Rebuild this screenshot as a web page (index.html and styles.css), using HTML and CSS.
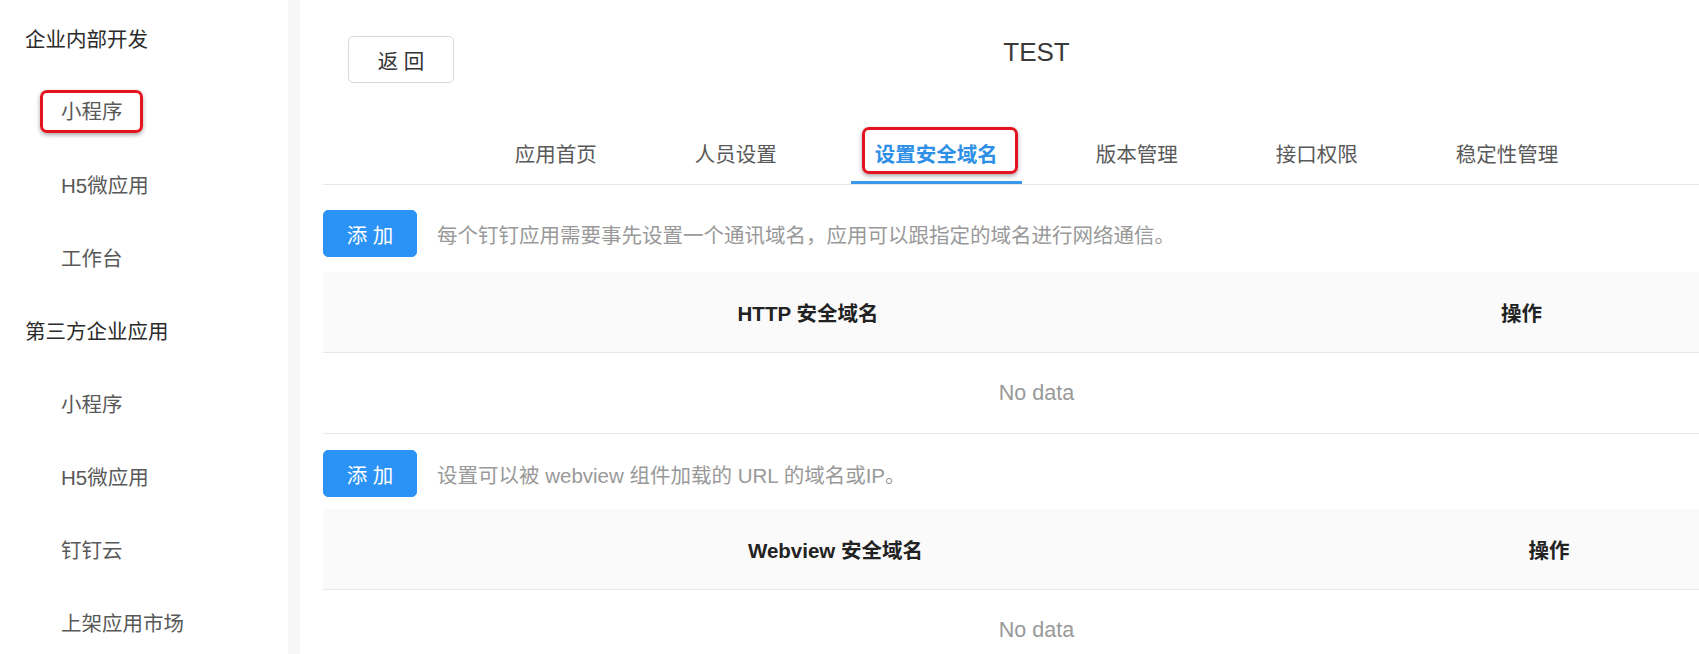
FILE: index.html
```html
<!DOCTYPE html>
<html lang="zh-CN">
<head>
  <meta charset="UTF-8">
  <meta name="viewport" content="width=device-width, initial-scale=1.0">
  <title>设置安全域名</title>
  <link rel="stylesheet" href="styles.css">
</head>
<body>

  <div class="layout">
    <ul class="sidebar">
      <li class="group">企业内部开发</li>
      <li class="item"><span class="marked">小程序</span></li>
      <li class="item">H5微应用</li>
      <li class="item">工作台</li>
      <li class="group">第三方企业应用</li>
      <li class="item">小程序</li>
      <li class="item">H5微应用</li>
      <li class="item">钉钉云</li>
      <li class="item">上架应用市场</li>
    </ul>

    <div class="main">
      <div class="header">
        <div class="back-cell"><button class="btn">返 回</button></div>
        <h1 class="title">TEST</h1>
        <div></div>
      </div>

      <ul class="tabs">
        <li class="tab">应用首页</li>
        <li class="tab">人员设置</li>
        <li class="tab active"><span class="marked">设置安全域名</span></li>
        <li class="tab">版本管理</li>
        <li class="tab">接口权限</li>
        <li class="tab">稳定性管理</li>
      </ul>

      <div class="toolbar">
        <button class="btn btn-primary">添 加</button>
        <span class="hint">每个钉钉应用需要事先设置一个通讯域名，应用可以跟指定的域名进行网络通信。</span>
      </div>
      <table class="domain-table">
        <colgroup>
          <col class="col-http">
          <col>
        </colgroup>
        <thead>
          <tr><th>HTTP 安全域名</th><th>操作</th></tr>
        </thead>
        <tbody>
          <tr><td class="empty" colspan="2">No data</td></tr>
        </tbody>
      </table>

      <div class="toolbar second">
        <button class="btn btn-primary">添 加</button>
        <span class="hint">设置可以被 webview 组件加载的 URL 的域名或IP。</span>
      </div>
      <table class="domain-table tight">
        <colgroup>
          <col class="col-webview">
          <col>
        </colgroup>
        <thead>
          <tr><th>Webview 安全域名</th><th>操作</th></tr>
        </thead>
        <tbody>
          <tr><td class="empty" colspan="2">No data</td></tr>
        </tbody>
      </table>
    </div>
  </div>

</body>
</html>
```

FILE: styles.css
```css
html, body {
  margin: 0;
  height: 100%;
  overflow: hidden;
}
body {
  font-family: "Liberation Sans", "Noto Sans CJK SC", sans-serif;
  font-size: 20.5px;
  color: #333;
  background-color: #fff;
}
.layout {
  display: flex;
  gap: 12px;
  width: max-content;
  min-height: 100vh;
  background-color: #f7f7f7;
}

/* sidebar */
.sidebar {
  list-style: none;
  margin: 0;
  padding: 2px 0 0;
  width: 288px;
  flex-shrink: 0;
  background-color: #fff;
}
.sidebar li {
  display: flex;
  align-items: center;
  height: 72.9px;
}
.group {
  padding-left: 25px;
  color: #2b2b2b;
}
.item {
  padding-left: 61px;
  color: #595959;
}
.marked {
  position: relative;
  line-height: 25px;
}
.marked::after {
  content: '';
  position: absolute;
  left: -21px;
  right: -20px;
  top: -9px;
  bottom: -9px;
  border: 3px solid #e3141f;
  border-radius: 7px;
  box-shadow: 0 2px 4px rgba(0, 0, 0, 0.35);
}

/* main */
.main {
  width: 1427px;
  flex-shrink: 0;
  padding-left: 23px;
  background-color: #fff;
}
.header {
  display: grid;
  grid-template-columns: 1fr auto 1fr;
  align-items: start;
  padding-top: 36px;
}
.back-cell {
  padding-left: 25px;
}
.title {
  margin: 0;
  font-size: 26px;
  font-weight: normal;
  line-height: 32px;
  color: #3a3a3a;
}
.btn {
  font-family: inherit;
  font-size: 20.5px;
  height: 47px;
  width: 106px;
  padding: 0;
  background-color: #fff;
  color: #333;
  border: 1px solid #d9d9d9;
  border-radius: 5px;
  cursor: pointer;
}
.btn-primary {
  width: 94px;
  background-color: #2b93f5;
  border-color: #2b93f5;
  color: #fff;
}

/* tabs */
.tabs {
  list-style: none;
  margin: 59px 0 0;
  padding: 0;
  display: flex;
  justify-content: center;
  gap: 50px;
  border-bottom: 1px solid #e8e8e8;
}
.tab {
  padding: 0 24px 14px;
  line-height: 25px;
  color: #595959;
  border-bottom: 3px solid transparent;
}
.tab.active {
  color: #2d8fe6;
  font-weight: bold;
  border-bottom-color: #3a97ea;
}
.tab .marked::after {
  left: -13px;
  right: -20px;
  top: -16px;
  bottom: -7.5px;
}

/* sections */
.toolbar {
  display: flex;
  align-items: center;
  gap: 20px;
  margin-top: 25px;
}
.toolbar.second {
  margin-top: 16px;
}
.hint {
  color: #999;
}
.domain-table {
  width: 100%;
  margin-top: 15px;
  border-collapse: collapse;
  table-layout: fixed;
}
.domain-table.tight {
  margin-top: 12px;
}
.col-http {
  width: 970px;
}
.col-webview {
  width: 1025px;
}
.domain-table th {
  height: 80px;
  padding: 0;
  background-color: #fafafa;
  border-bottom: 1px solid #e8e8e8;
  color: #222;
  font-weight: bold;
  text-align: center;
}
.domain-table td.empty {
  height: 80px;
  padding: 0;
  text-align: center;
  color: #999;
  font-size: 21.5px;
  border-bottom: 1px solid #e8e8e8;
}
```
